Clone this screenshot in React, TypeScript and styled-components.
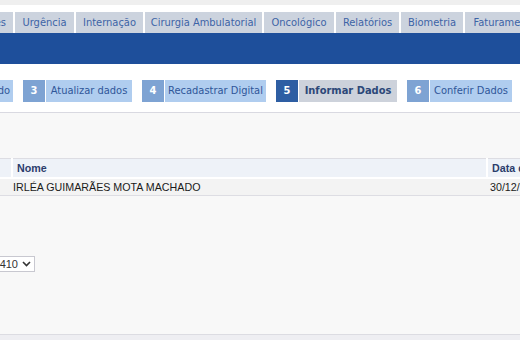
import styled, { createGlobalStyle } from "styled-components"

const GlobalStyle = createGlobalStyle`
  html, body {
    margin: 0;
    padding: 0;
    background: #ffffff;
    overflow: hidden;
  }
  body {
    font-family: "DejaVu Sans", Verdana, sans-serif;
  }
`

const Page = styled.div`
  width: 520px;
  height: 340px;
  overflow: hidden;
  display: flex;
  flex-direction: column;
  background: #ffffff;
`

const TopStrip = styled.div`
  height: 5px;
  background: #efefef;
  flex-shrink: 0;
`

const TabBar = styled.nav`
  display: flex;
  gap: 2px;
  margin-top: 7px;
  margin-left: -61px;
  height: 21px;
  flex-shrink: 0;
`

const Tab = styled.a<{ $w: number; $cut?: boolean }>`
  width: ${(p) => p.$w}px;
  flex-shrink: 0;
  background: #ccd3de;
  color: #3d63a6;
  font-family: "DejaVu Sans Condensed", "DejaVu Sans", sans-serif;
  font-size: 11px;
  display: flex;
  align-items: center;
  justify-content: ${(p) => (p.$cut ? "flex-end" : "center")};
  padding-right: ${(p) => (p.$cut ? "7px" : "0")};
  box-sizing: border-box;
  white-space: nowrap;
  overflow: hidden;
  text-decoration: none;
`

const BlueBar = styled.div`
  height: 31px;
  background: #1e4f9b;
  flex-shrink: 0;
`

const StepsArea = styled.div`
  height: 48px;
  display: flex;
  align-items: center;
  border-bottom: 1px solid #d9d9e1;
  flex-shrink: 0;
`

const Steps = styled.div`
  display: flex;
  gap: 10px;
  margin-left: -53px;
  margin-top: 5px;
`

const Step = styled.div`
  display: flex;
  height: 22px;
  gap: 1px;
  flex-shrink: 0;
`

const StepNum = styled.span<{ $active?: boolean }>`
  width: 22px;
  background: ${(p) => (p.$active ? "#2e5ea3" : "#7ea3d3")};
  color: #ffffff;
  font-weight: bold;
  font-family: "DejaVu Sans Condensed", "DejaVu Sans", sans-serif;
  font-size: 11px;
  display: flex;
  align-items: center;
  justify-content: center;
`

const StepLabel = styled.span<{ $active?: boolean; $w: number; $cut?: boolean }>`
  width: ${(p) => p.$w}px;
  box-sizing: border-box;
  background: ${(p) => (p.$active ? "#cdd2db" : "#b0cdef")};
  color: ${(p) => (p.$active ? "#2c4878" : "#2f5699")};
  font-weight: ${(p) => (p.$active ? "bold" : "normal")};
  font-family: "DejaVu Sans Condensed", "DejaVu Sans", sans-serif;
  font-size: 11px;
  display: flex;
  align-items: center;
  justify-content: ${(p) => (p.$cut ? "flex-end" : "center")};
  padding-right: ${(p) => (p.$cut ? "3px" : "0")};
  white-space: nowrap;
  overflow: hidden;
`

const Content = styled.main`
  flex: 1;
  background: #f8f8f8;
  display: flex;
  flex-direction: column;
  border-bottom: 1px solid #dcdce2;
`

const Table = styled.table`
  margin-top: 45px;
  width: 600px;
  table-layout: fixed;
  border-collapse: collapse;
  font-family: "Liberation Sans", Arial, sans-serif;
  font-size: 10.7px;
  border-top: 1px solid #dddde3;
  border-bottom: 1px solid #dddde3;
`

const Th = styled.th<{ $w: number }>`
  width: ${(p) => p.$w}px;
  box-sizing: border-box;
  height: 19px;
  padding: 0 4px;
  background: #eef2f8;
  color: #2b3d6c;
  text-align: left;
  font-weight: bold;
  border-right: 2px solid #ffffff;
  border-bottom: 2px solid #ffffff;
  white-space: nowrap;
  overflow: hidden;
`

const Td = styled.td`
  height: 16px;
  padding: 0 1px;
  background: #f3f3f3;
  color: #1a1a1a;
  white-space: nowrap;
  overflow: hidden;
`

const SelectRow = styled.div`
  margin-top: 60px;
  margin-left: -24px;
`

const Select = styled.div`
  width: 54px;
  height: 14px;
  background: #ffffff;
  border: 1px solid #c8c8d0;
  display: flex;
  align-items: center;
  justify-content: flex-end;
  gap: 4px;
  padding-right: 3px;
  font-family: "Liberation Sans", Arial, sans-serif;
  font-size: 11px;
  color: #333333;
`

const Footer = styled.div`
  height: 5px;
  background: #eeeef2;
  flex-shrink: 0;
`

const tabs: [string, number][] = [
  ["Pacientes", 74],
  ["Urgência", 59],
  ["Internação", 67],
  ["Cirurgia Ambulatorial", 117],
  ["Oncológico", 70],
  ["Relatórios", 63],
  ["Biometria", 62],
  ["Faturamento", 80],
]

export default function App() {
  return (
    <Page>
      <GlobalStyle />
      <TopStrip />
      <TabBar>
        {tabs.map(([label, w], i) => (
          <Tab key={label} $w={w} $cut={i === 0} href="#">
            {label}
          </Tab>
        ))}
      </TabBar>
      <BlueBar />
      <StepsArea>
        <Steps>
          <Step>
            <StepNum>2</StepNum>
            <StepLabel $cut $w={43}>Cuidado</StepLabel>
          </Step>
          <Step>
            <StepNum>3</StepNum>
            <StepLabel $w={86}>Atualizar dados</StepLabel>
          </Step>
          <Step>
            <StepNum>4</StepNum>
            <StepLabel $w={101}>Recadastrar Digital</StepLabel>
          </Step>
          <Step>
            <StepNum $active>5</StepNum>
            <StepLabel $active $w={98}>Informar Dados</StepLabel>
          </Step>
          <Step>
            <StepNum>6</StepNum>
            <StepLabel $w={82}>Conferir Dados</StepLabel>
          </Step>
        </Steps>
      </StepsArea>
      <Content>
        <Table>
          <thead>
            <tr>
              <Th $w={12}></Th>
              <Th $w={475}>Nome</Th>
              <Th $w={113}>Data de Nascimento</Th>
            </tr>
          </thead>
          <tbody>
            <tr>
              <Td></Td>
              <Td>IRLÉA GUIMARÃES MOTA MACHADO</Td>
              <Td style={{ paddingLeft: 3 }}>30/12/1950</Td>
            </tr>
          </tbody>
        </Table>
        <SelectRow>
          <Select>
            <span>1410</span>
            <svg width="9" height="6" viewBox="0 0 9 6">
              <path d="M1 1 L4.5 4.5 L8 1" fill="none" stroke="#333" strokeWidth="1.6" />
            </svg>
          </Select>
        </SelectRow>
      </Content>
      <Footer />
    </Page>
  )
}
